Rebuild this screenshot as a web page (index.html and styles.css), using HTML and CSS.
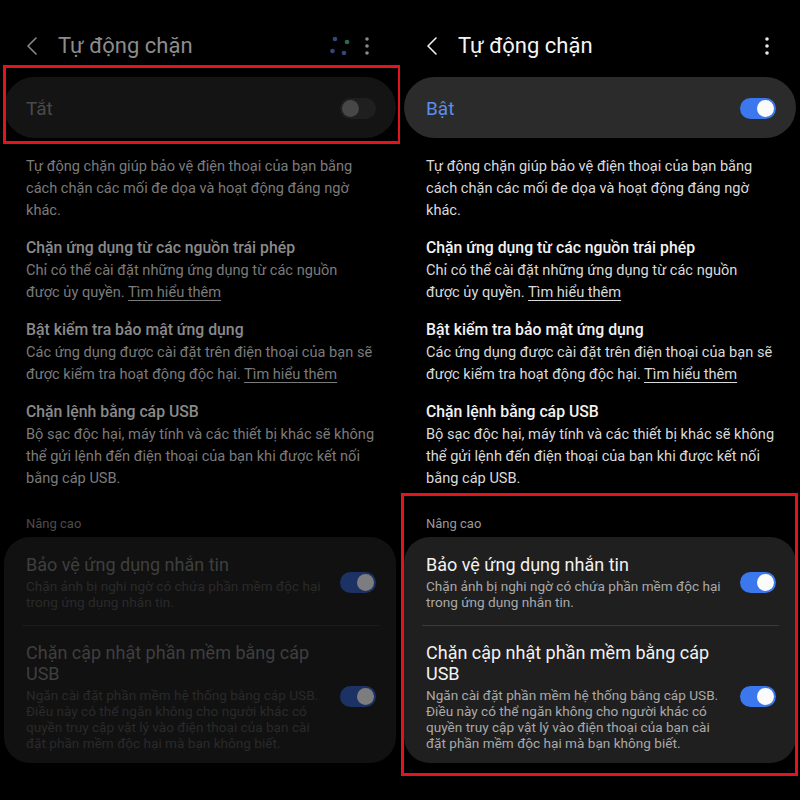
FILE: index.html
```html
<!DOCTYPE html>
<html lang="vi">
<head>
<meta charset="utf-8">
<title>Tự động chặn</title>
<link rel="stylesheet" href="styles.css">
</head>
<body>
<div class="screens">
  <section class="screen screen-off">
    <header class="appbar">
      <svg class="back" width="14" height="20" viewBox="0 0 14 20"><path d="M11 2 L3 10 L11 18" fill="none" stroke-width="1.6" stroke-linecap="round" stroke-linejoin="round"/></svg>
      <h1 class="title">Tự động chặn</h1>
      <svg class="progress" width="22" height="22" viewBox="0 0 22 22">
        <circle cx="5" cy="4" r="2.3" fill="#34467c"/>
        <circle cx="17" cy="7" r="2.3" fill="#2d6a4f"/>
        <circle cx="2.5" cy="16" r="2.3" fill="#34467c"/>
        <circle cx="14" cy="18" r="2.3" fill="#34467c"/>
      </svg>
      <svg class="more" width="6" height="20" viewBox="0 0 6 20"><circle cx="3" cy="3" r="1.8"/><circle cx="3" cy="10" r="1.8"/><circle cx="3" cy="17" r="1.8"/></svg>
    </header>
    <div class="master">
      <span class="master-label">Tắt</span>
      <span class="switch"></span>
    </div>
    <div class="info">
      <p class="intro">Tự động chặn giúp bảo vệ điện thoại của bạn bằng<br>cách chặn các mối đe dọa và hoạt động đáng ngờ<br>khác.</p>
      <div class="feature">
        <h2>Chặn ứng dụng từ các nguồn trái phép</h2>
        <p>Chỉ có thể cài đặt những ứng dụng từ các nguồn<br>được ủy quyền. <u>Tìm hiểu thêm</u></p>
      </div>
      <div class="feature">
        <h2>Bật kiểm tra bảo mật ứng dụng</h2>
        <p>Các ứng dụng được cài đặt trên điện thoại của bạn sẽ<br>được kiểm tra hoạt động độc hại. <u>Tìm hiểu thêm</u></p>
      </div>
      <div class="feature">
        <h2>Chặn lệnh bằng cáp USB</h2>
        <p>Bộ sạc độc hại, máy tính và các thiết bị khác sẽ không<br>thể gửi lệnh đến điện thoại của bạn khi được kết nối<br>bằng cáp USB.</p>
      </div>
    </div>
    <div class="group-label">Nâng cao</div>
    <div class="group">
      <div class="row">
        <div class="row-text">
          <div class="row-title">Bảo vệ ứng dụng nhắn tin</div>
          <div class="row-sub">Chặn ảnh bị nghi ngờ có chứa phần mềm độc hại<br>trong ứng dụng nhắn tin.</div>
        </div>
        <span class="switch on"></span>
      </div>
      <div class="divider"></div>
      <div class="row">
        <div class="row-text">
          <div class="row-title">Chặn cập nhật phần mềm bằng cáp<br>USB</div>
          <div class="row-sub">Ngăn cài đặt phần mềm hệ thống bằng cáp USB.<br>Điều này có thể ngăn không cho người khác có<br>quyền truy cập vật lý vào điện thoại của bạn cài<br>đặt phần mềm độc hại mà bạn không biết.</div>
        </div>
        <span class="switch on"></span>
      </div>
    </div>
    <div class="mark mark-master"></div>
  </section>

  <section class="screen screen-on">
    <header class="appbar">
      <svg class="back" width="14" height="20" viewBox="0 0 14 20"><path d="M11 2 L3 10 L11 18" fill="none" stroke-width="1.6" stroke-linecap="round" stroke-linejoin="round"/></svg>
      <h1 class="title">Tự động chặn</h1>
      <svg class="more" width="6" height="20" viewBox="0 0 6 20"><circle cx="3" cy="3" r="1.8"/><circle cx="3" cy="10" r="1.8"/><circle cx="3" cy="17" r="1.8"/></svg>
    </header>
    <div class="master">
      <span class="master-label">Bật</span>
      <span class="switch on"></span>
    </div>
    <div class="info">
      <p class="intro">Tự động chặn giúp bảo vệ điện thoại của bạn bằng<br>cách chặn các mối đe dọa và hoạt động đáng ngờ<br>khác.</p>
      <div class="feature">
        <h2>Chặn ứng dụng từ các nguồn trái phép</h2>
        <p>Chỉ có thể cài đặt những ứng dụng từ các nguồn<br>được ủy quyền. <u>Tìm hiểu thêm</u></p>
      </div>
      <div class="feature">
        <h2>Bật kiểm tra bảo mật ứng dụng</h2>
        <p>Các ứng dụng được cài đặt trên điện thoại của bạn sẽ<br>được kiểm tra hoạt động độc hại. <u>Tìm hiểu thêm</u></p>
      </div>
      <div class="feature">
        <h2>Chặn lệnh bằng cáp USB</h2>
        <p>Bộ sạc độc hại, máy tính và các thiết bị khác sẽ không<br>thể gửi lệnh đến điện thoại của bạn khi được kết nối<br>bằng cáp USB.</p>
      </div>
    </div>
    <div class="group-label">Nâng cao</div>
    <div class="group">
      <div class="row">
        <div class="row-text">
          <div class="row-title">Bảo vệ ứng dụng nhắn tin</div>
          <div class="row-sub">Chặn ảnh bị nghi ngờ có chứa phần mềm độc hại<br>trong ứng dụng nhắn tin.</div>
        </div>
        <span class="switch on"></span>
      </div>
      <div class="divider"></div>
      <div class="row">
        <div class="row-text">
          <div class="row-title">Chặn cập nhật phần mềm bằng cáp<br>USB</div>
          <div class="row-sub">Ngăn cài đặt phần mềm hệ thống bằng cáp USB.<br>Điều này có thể ngăn không cho người khác có<br>quyền truy cập vật lý vào điện thoại của bạn cài<br>đặt phần mềm độc hại mà bạn không biết.</div>
        </div>
        <span class="switch on"></span>
      </div>
    </div>
    <div class="mark mark-advanced"></div>
  </section>
</div>
</body>
</html>
```

FILE: styles.css
```css
* { box-sizing: border-box; }
html, body { margin: 0; padding: 0; background: #000; }
body {
  width: 800px;
  height: 800px;
  overflow: hidden;
  font-family: Roboto, "Noto Sans", sans-serif;
}
.screens {
  display: grid;
  grid-template-columns: 400px 400px;
  height: 800px;
}
.screen {
  position: relative;
  background: #000;
  height: 800px;
}
h1, h2, p { margin: 0; font-weight: normal; }

/* app bar */
.appbar {
  display: flex;
  align-items: center;
  height: 77px;
  padding: 14px 0 0 25px;
}
.back { flex: none; }
.title {
  font-size: 22px;
  line-height: 28px;
  margin-left: 19px;
  flex: 1;
}
.progress { margin-right: 12px; }
.more { margin-right: 30px; }

/* master switch */
.master {
  height: 61px;
  margin: 0 4px;
  border-radius: 31px;
  display: flex;
  align-items: center;
  justify-content: space-between;
  padding: 1px 20px 0 22px;
}
.master-label { font-size: 19px; }

/* info */
.info { padding: 17px 20px 0 26px; white-space: nowrap; }
.intro, .feature p { font-size: 14.6px; line-height: 22px; }
.feature { margin-top: 15px; }
.feature h2 { font-size: 15.8px; line-height: 23px; font-weight: 500; }
.feature u { text-underline-offset: 3px; text-decoration-thickness: 1px; }

.group-label {
  margin-top: 26px;
  padding-left: 26px;
  font-size: 13px;
  line-height: 18px;
}
.group {
  margin: 4px 4px 0;
  border-radius: 26px;
  padding: 17px 0 12px;
}
.row {
  display: flex;
  align-items: center;
  padding: 0 20px 0 22px;
}
.row-text { flex: 1; white-space: nowrap; }
.row-title { font-size: 18px; line-height: 21px; }
.row-sub { font-size: 13.6px; line-height: 15.7px; margin-top: 4px; }
.divider { height: 1px; margin: 15px 17px 16px 18px; }

/* switch */
.switch {
  position: relative;
  flex: none;
  width: 36px;
  height: 21px;
  border-radius: 11px;
}
.switch::after {
  content: "";
  position: absolute;
  top: 2px;
  left: 2px;
  width: 17px;
  height: 17px;
  border-radius: 50%;
}
.switch.on::after { left: auto; right: 2px; }

/* off / dimmed screen */
.screen-off .back path { stroke: #8a8a8a; }
.screen-off .title { color: #8c8c8c; }
.screen-off .more { fill: #8a8a8a; }
.screen-off .master { background: #141414; }
.screen-off .master-label { color: #4a4a4a; }
.screen-off .master .switch { background: #1f1f1f; }
.screen-off .master .switch::after { background: #474747; }
.screen-off .intro, .screen-off .feature p { color: #7b7b7b; }
.screen-off .feature h2 { color: #8a8a8a; }
.screen-off .group-label { color: #4c4c4c; }
.screen-off .group { background: #111111; }
.screen-off .row-title { color: #3f3f3f; }
.screen-off .row-sub { color: #2a2a2a; }
.screen-off .divider { background: #1c1c1c; }
.screen-off .group .switch { background: #1c3264; }
.screen-off .group .switch::after { background: #7d7d80; }

/* on screen */
.screen-on .back path { stroke: #f2f2f2; }
.screen-on .title { color: #f4f4f4; }
.screen-on .more { fill: #e8e8e8; }
.screen-on .master { background: #2b2b2b; }
.screen-on .master-label { color: #5b8fea; }
.screen-on .intro, .screen-on .feature p { color: #dadada; }
.screen-on .feature h2 { color: #f2f2f2; }
.screen-on .group-label { color: #9a9a9a; }
.screen-on .group { background: #1f1f1f; }
.screen-on .row-title { color: #f2f2f2; }
.screen-on .row-sub { color: #a9a9a9; }
.screen-on .divider { background: #3a3a3a; }
.screen-on .switch { background: #3b78ee; }
.screen-on .switch::after { background: #fbfbfb; }

/* red annotation frames */
.mark {
  position: absolute;
  border: 3px solid #e3141b;
  pointer-events: none;
}
.mark-master { left: 3px; top: 65px; width: 398px; height: 79px; }
.mark-advanced { left: 1px; top: 493px; width: 397px; height: 283px; }
```
